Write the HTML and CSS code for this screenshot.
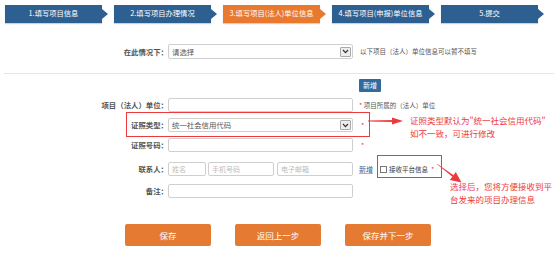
FILE: index.html
```html
<!DOCTYPE html>
<html lang="zh-CN">
<head>
<meta charset="utf-8">
<title>填写项目(法人)单位信息</title>
<link rel="stylesheet" href="styles.css">
</head>
<body>
<div class="page">
  <div class="steps">
    <div class="step">1.填写项目信息</div>
    <div class="step">2.填写项目办理情况</div>
    <div class="step active">3.填写项目(法人)单位信息</div>
    <div class="step">4.填写项目(申报)单位信息</div>
    <div class="step">5.提交</div>
  </div>

  <div class="row top-row">
    <span class="label">在此情况下：</span>
    <div class="field select w185">
      <span>请选择</span>
      <span class="caret"><svg width="7" height="5" viewBox="0 0 7 5"><path d="M1 1 L3.5 3.6 L6 1" fill="none" stroke="#333" stroke-width="1.2"/></svg></span>
    </div>
    <span class="hint">以下项目（法人）单位信息可以暂不填写</span>
  </div>

  <div class="divider"></div>

  <div class="add-line"><span class="add-btn">新增</span></div>

  <div class="row r1">
    <span class="label">项目（法人）单位：</span>
    <div class="field w185"></div>
    <span class="note"><span class="star">*</span> 项目所属的（法人）单位</span>
  </div>

  <div class="row r2">
    <span class="label">证照类型：</span>
    <div class="field select w185">
      <span class="val">统一社会信用代码</span>
      <span class="caret"><svg width="7" height="5" viewBox="0 0 7 5"><path d="M1 1 L3.5 3.6 L6 1" fill="none" stroke="#333" stroke-width="1.2"/></svg></span>
    </div>
    <span class="star mark">*</span>
  </div>

  <div class="row r3">
    <span class="label">证照号码：</span>
    <div class="field w185"></div>
    <span class="star mark">*</span>
  </div>

  <div class="row r4">
    <span class="label">联系人：</span>
    <div class="contacts">
      <div class="field ph w38">姓名</div>
      <div class="field ph w66">手机号码</div>
      <div class="field ph w76">电子邮箱</div>
    </div>
    <span class="link">新增</span>
    <span class="check"><span class="box"></span>接收平台信息<span class="star">*</span></span>
  </div>

  <div class="row r5">
    <span class="label">备注：</span>
    <div class="field w185"></div>
  </div>

  <div class="actions">
    <span class="btn">保存</span>
    <span class="btn">返回上一步</span>
    <span class="btn">保存并下一步</span>
  </div>

  <div class="mark-box box1"></div>
  <div class="mark-box box2"></div>
  <svg class="arrow arrow1" width="44" height="16" viewBox="0 0 44 16">
    <polygon points="4,7.6 30,7 30,9 4,8.4" fill="#ec3a3f"/>
    <polygon points="28,4.5 39,8 28,11.5" fill="#ec3a3f"/>
  </svg>
  <svg class="arrow arrow2" width="40" height="30" viewBox="0 0 40 30">
    <polygon points="7,5.7 23.6,17.2 22.4,18.8 7,6.3" fill="#ec3a3f"/>
    <polygon points="19.8,22 25.8,14 31.5,24.5" fill="#ec3a3f"/>
  </svg>
  <div class="tip tip1">证照类型默认为"统一社会信用代码"<br>如不一致，可进行修改</div>
  <div class="tip tip2">选择后，您将方便接收到平<br>台发来的项目办理信息</div>
</div>
</body>
</html>
```

FILE: styles.css
```css
* { box-sizing: border-box; margin: 0; padding: 0; }
html, body { width: 554px; height: 253px; overflow: hidden; background: #fff; }
body { font-family: "Noto Sans CJK SC", "Noto Sans", sans-serif; color: #333; line-height: 1; }
.page { position: relative; width: 554px; height: 253px; overflow: hidden; }

.steps { display: flex; gap: 12px; padding: 5px 0 0 5px; }
.step {
  position: relative; width: 97px; height: 18px; flex: none;
  background: #2d5f91; color: #fff; font-size: 7.3px;
  display: flex; align-items: center; justify-content: center; white-space: nowrap;
  box-shadow: 0 1px 1px rgba(0,0,0,.18);
}
.step::after {
  content: ""; position: absolute; left: 100%; top: 4px;
  border-left: 6px solid #2d5f91; border-top: 5px solid transparent; border-bottom: 5px solid transparent;
}
.step.active { background: #e8792f; }
.step.active::after { border-left-color: #e8792f; }

.row { display: flex; align-items: center; height: 14px; }
.top-row { margin-top: 21px; height: 15px; }
.label { width: 168px; flex: none; text-align: right; font-size: 7.4px; font-weight: bold; color: #555; white-space: nowrap; }

.field {
  height: 100%; border: 1px solid #cfcfcf; border-radius: 2px; background: #fff;
  font-size: 7.4px; color: #555; display: flex; align-items: center; padding-left: 3px; flex: none;
}
.select { justify-content: space-between; padding-right: 1px; }
.caret {
  width: 11px; height: 10px; border: 1px solid #a9a9a9; border-radius: 1px; background: #eee;
  display: flex; align-items: center; justify-content: center;
}
.w185 { width: 185px; }
.w38 { width: 38px; }
.w66 { width: 66px; }
.w76 { width: 76px; }
.ph { color: #bbb; font-size: 7px; }
.contacts { display: flex; gap: 2px; height: 100%; }
.contacts .w76 { margin-left: 1px; }

.hint { margin-left: 7px; font-size: 6.5px; color: #555; white-space: nowrap; }
.note { margin-left: 6px; font-size: 6.5px; color: #555; white-space: nowrap; }
.star { color: #e8393e; font-size: 7px; }
.mark { margin-left: 8px; }

.divider { margin: 14px 0 0 4px; height: 1px; background: #e6e6e6; }
.add-line { margin-top: 5px; padding-left: 359px; display: flex; }
.add-btn {
  width: 22px; height: 13px; background: #336a9e; color: #fff; font-size: 7px;
  display: flex; align-items: center; justify-content: center; border-radius: 1px;
}

.r1 { margin-top: 6px; }
.r2 { margin-top: 6px; }
.r3 { margin-top: 6px; }
.r4 { margin-top: 10px; }
.r5 { margin-top: 8px; }

.link { margin-left: 6px; color: #2a62a3; font-size: 7px; text-decoration: underline; text-decoration-color: #9db7d6; }
.check { margin-left: 7px; display: flex; align-items: center; font-size: 6.5px; color: #333; white-space: nowrap; }
.check .box { width: 7px; height: 7px; border: 1px solid #777; background: #fff; margin-right: 2px; }
.check .star { margin-left: 3px; }

.actions { margin-top: 26px; padding-left: 125px; display: flex; gap: 24px; }
.btn {
  width: 86px; height: 22px; background: #e57a33; color: #fff; font-size: 8.5px;
  display: flex; align-items: center; justify-content: center; border-radius: 2px;
}

.mark-box { position: absolute; border: 1.5px solid #ec3a3f; }
.box1 { left: 126px; top: 112px; width: 244px; height: 25px; }
.box2 { left: 377px; top: 155px; width: 65px; height: 23px; }
.arrow { position: absolute; }
.arrow1 { left: 364px; top: 113px; }
.arrow2 { left: 430px; top: 158px; }
.tip { position: absolute; color: #ec3a3f; font-size: 8.5px; line-height: 12.5px; white-space: nowrap; }
.tip1 { left: 410px; top: 114px; }
.tip2 { left: 450px; top: 180px; }
```
